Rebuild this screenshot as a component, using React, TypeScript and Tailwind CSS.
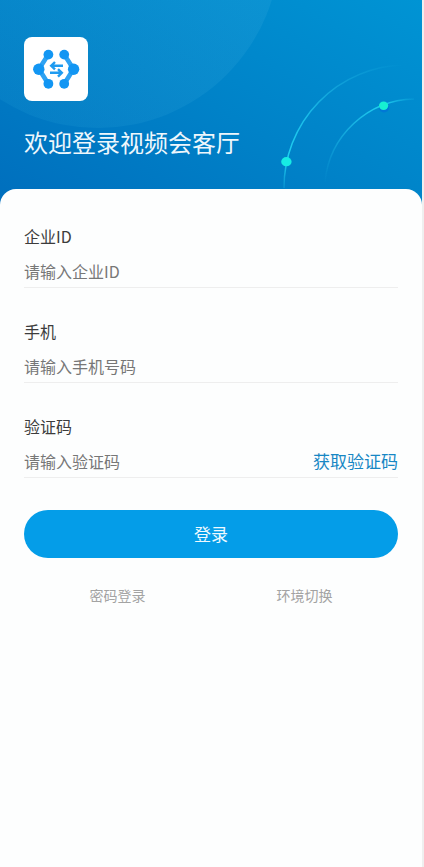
import { useState } from 'react'
import type { FormEvent, ReactNode } from 'react'

function Logo() {
  return (
    <div className="w-16 h-16 rounded-lg bg-white overflow-hidden">
      <svg className="w-16 h-16" viewBox="0 0 64 64" fill="none">
        <g stroke="#2fa2f2" strokeWidth="4.6">
          <path d="M24 18L15 32L24 46.5" />
          <path d="M40.5 18L49.5 32L40.5 46.5" />
        </g>
        <g fill="#1296f3">
          <circle cx="24.4" cy="17.6" r="4.9" />
          <circle cx="40.2" cy="17.6" r="4.9" />
          <circle cx="14.8" cy="32.2" r="5.7" />
          <circle cx="49.6" cy="32.2" r="5.7" />
          <circle cx="24.4" cy="46.8" r="4.9" />
          <circle cx="40.2" cy="46.8" r="4.9" />
        </g>
        <g stroke="#1f9bf0" strokeWidth="2.4">
          <path d="M39 28.8H27M31 25L27.2 28.8L31 32.4" />
          <path d="M26 35.8H38M34 32.2L37.8 35.8L34 39.6" />
        </g>
      </svg>
    </div>
  )
}

function HeaderArt() {
  return (
    <>
      <svg className="absolute left-0 top-0" width="290" height="130" viewBox="0 0 290 130">
        <defs>
          <linearGradient id="disc" x1="0" y1="128" x2="240" y2="0" gradientUnits="userSpaceOnUse">
            <stop offset="0" stopColor="#2fb4e0" stopOpacity="0.12" />
            <stop offset="1" stopColor="#5fc0e8" stopOpacity="0.12" />
          </linearGradient>
        </defs>
        <circle cx="98" cy="-54" r="182" fill="url(#disc)" />
      </svg>

      <svg className="absolute right-0 top-0" width="162" height="205" viewBox="260 0 162 205" fill="none">
        <defs>
          <linearGradient id="outerArc" x1="284" y1="190" x2="402" y2="64" gradientUnits="userSpaceOnUse">
            <stop offset="0" stopColor="#1fc6ee" stopOpacity="0.2" />
            <stop offset="0.14" stopColor="#1fd0f0" stopOpacity="1" />
            <stop offset="0.4" stopColor="#1fc6ee" stopOpacity="0.85" />
            <stop offset="0.65" stopColor="#1fb8e6" stopOpacity="0.5" />
            <stop offset="1" stopColor="#1fb8e6" stopOpacity="0" />
          </linearGradient>
          <linearGradient id="innerArc" x1="325" y1="184" x2="414" y2="98" gradientUnits="userSpaceOnUse">
            <stop offset="0" stopColor="#1fb8e6" stopOpacity="0" />
            <stop offset="0.5" stopColor="#1fc0ea" stopOpacity="0.75" />
            <stop offset="0.78" stopColor="#1fd0f0" stopOpacity="1" />
            <stop offset="1" stopColor="#1fc6ee" stopOpacity="0.1" />
          </linearGradient>
        </defs>
        <path d="M284 188A122.5 122.5 0 0 1 404 65" stroke="url(#outerArc)" strokeWidth="1.5" />
        <path d="M325 182A91.5 91.5 0 0 1 414 99" stroke="url(#innerArc)" strokeWidth="1.5" />
        <ellipse cx="384" cy="108" rx="5" ry="4.4" fill="#0070d8" opacity="0.7" />
        <ellipse cx="383.6" cy="105.8" rx="4.6" ry="4.2" fill="#17f0d2" />
        <ellipse cx="286.4" cy="161.7" rx="5.2" ry="4.6" fill="#17ebe4" />
      </svg>
    </>
  )
}

interface FieldProps {
  id: string
  label: string
  placeholder: string
  value: string
  onChange: (value: string) => void
  type?: string
  action?: ReactNode
}

function Field({ id, label, placeholder, value, onChange, type = 'text', action }: FieldProps) {
  return (
    <div className="flex flex-col gap-2">
      <label htmlFor={id} className="text-base leading-6 text-[#3c3c3c]">
        {label}
      </label>
      <div className="flex items-center pb-px border-b border-[#eeeeee]">
        <input
          id={id}
          type={type}
          value={value}
          placeholder={placeholder}
          onChange={e => onChange(e.target.value)}
          className="flex-1 min-w-0 h-[30px] bg-transparent text-base text-[#3c3c3c]
            placeholder:text-[#777777] outline-none"
        />
        {action}
      </div>
    </div>
  )
}

export default function App() {
  const [company, setCompany] = useState('')
  const [phone, setPhone] = useState('')
  const [code, setCode] = useState('')

  function handleSubmit(e: FormEvent) {
    e.preventDefault()
  }

  return (
    <div className="min-h-screen flex flex-col bg-white border-r-2 border-[#efefef]
      font-['Noto_Sans_CJK_SC',sans-serif]">

      {/* Header */}
      <header className="relative px-6 pt-[37px] pb-[49px]
        bg-[linear-gradient(30deg,#006ebd_0%,#0082c8_50%,#0094d4_100%)]">
        <HeaderArt />
        <div className="relative flex flex-col gap-[23px]">
          <Logo />
          <h1 className="text-2xl leading-9 text-[#eef7fc]">欢迎登录视频会客厅</h1>
        </div>
      </header>

      {/* Form */}
      <main className="relative -mt-5 flex-1 rounded-t-2xl bg-[#fdfefe] px-6 pt-[35px]">
        <form onSubmit={handleSubmit} className="flex flex-col gap-[31px]">
          <Field
            id="company"
            label="企业ID"
            placeholder="请输入企业ID"
            value={company}
            onChange={setCompany}
          />
          <Field
            id="phone"
            type="tel"
            label="手机"
            placeholder="请输入手机号码"
            value={phone}
            onChange={setPhone}
          />
          <Field
            id="code"
            label="验证码"
            placeholder="请输入验证码"
            value={code}
            onChange={setCode}
            action={
              <button type="button" className="shrink-0 text-[17px] leading-6 text-[#1787c4]">
                获取验证码
              </button>
            }
          />
          <button
            type="submit"
            className="mt-px h-12 w-full rounded-full bg-[#049de8] text-[17px] text-[#eef9ff]"
          >
            登录
          </button>
        </form>

        <div className="mt-[27px] grid grid-cols-2 text-sm text-[#a3a3a3]">
          <button type="button">密码登录</button>
          <button type="button">环境切换</button>
        </div>
      </main>
    </div>
  )
}
